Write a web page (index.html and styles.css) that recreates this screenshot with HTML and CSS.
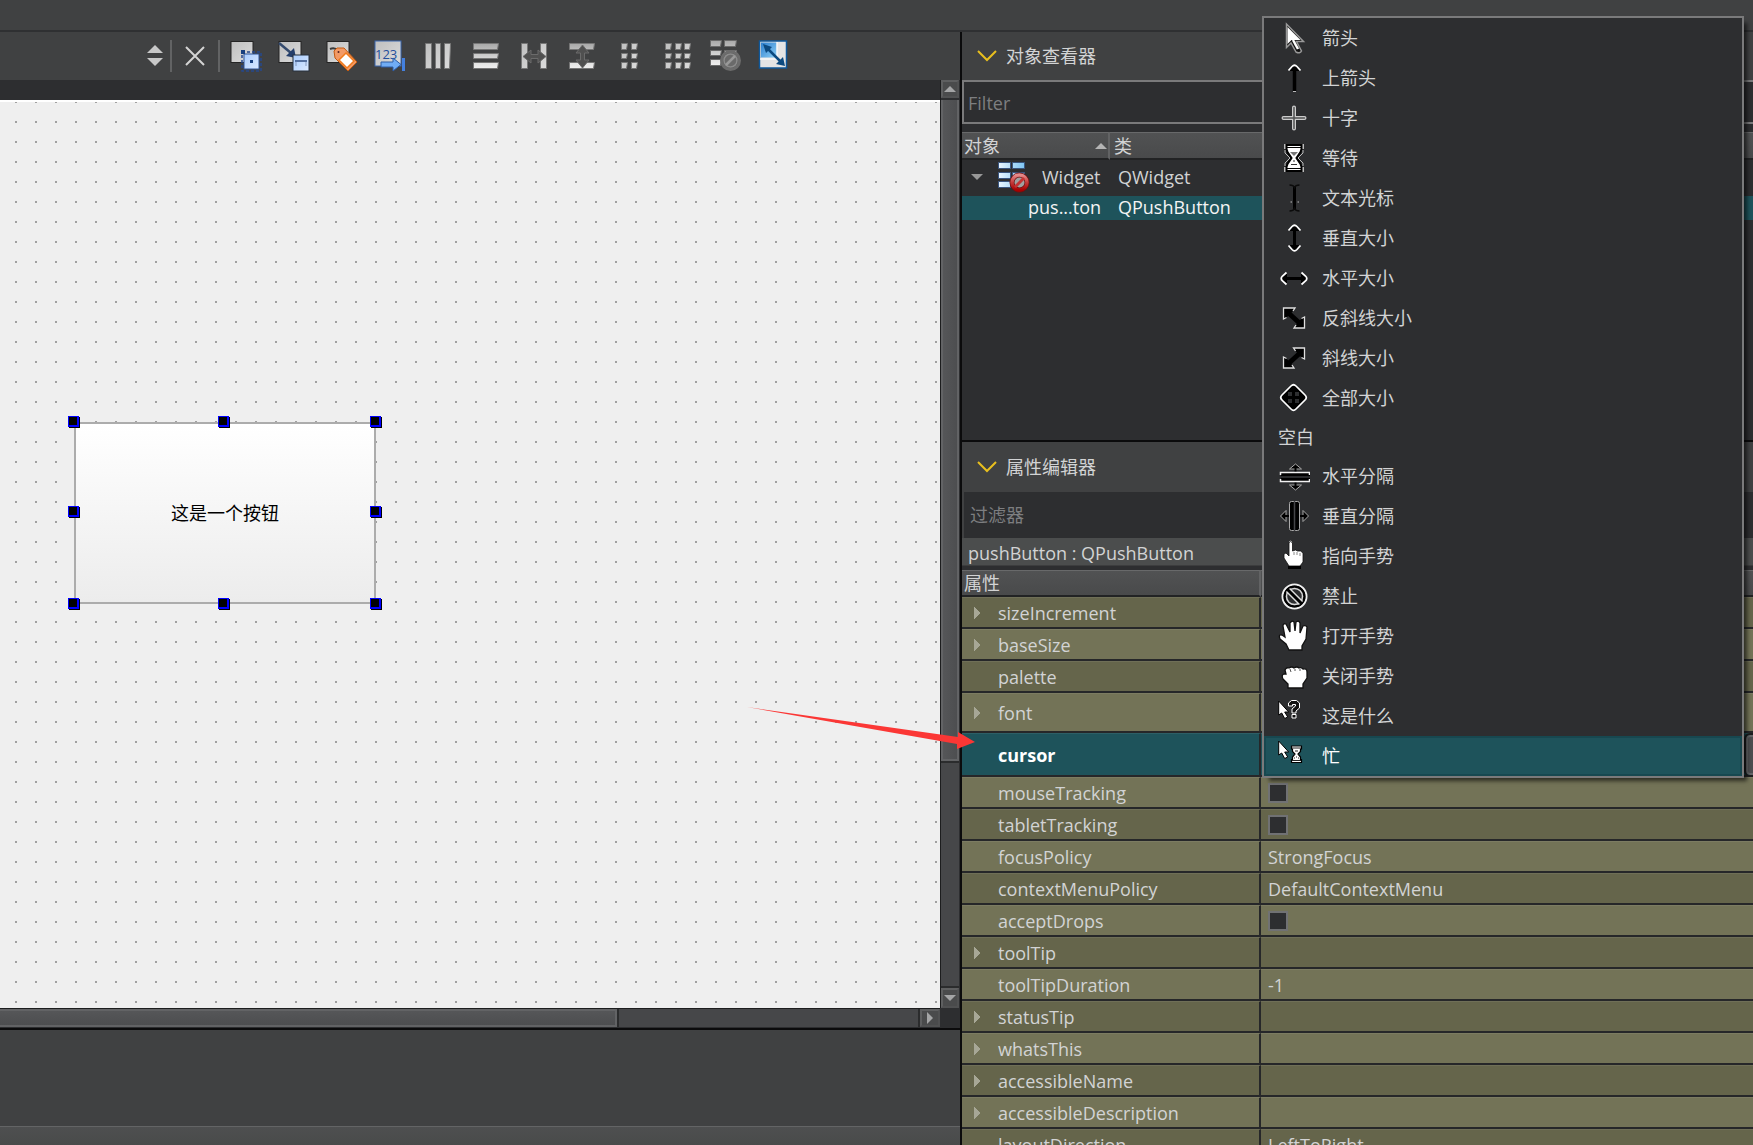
FILE: index.html
```html
<!DOCTYPE html>
<html lang="zh-CN">
<head>
<meta charset="utf-8">
<title>Qt Designer</title>
<link rel="stylesheet" href="styles.css">
</head>
<body>
<svg class="defs" aria-hidden="true">
  <defs>
    <linearGradient id="steel" x1="0" y1="0" x2="1" y2="1"><stop offset="0" stop-color="#bfbfbf"/><stop offset="1" stop-color="#dcdcdc"/></linearGradient>
    <linearGradient id="bar" x1="0" y1="0" x2="0" y2="1"><stop offset="0" stop-color="#a8a8a8"/><stop offset=".7" stop-color="#dedede"/><stop offset="1" stop-color="#f0f0f0"/></linearGradient>
    <linearGradient id="sky" x1="0" y1="0" x2="1" y2="1"><stop offset="0" stop-color="#a9cdff"/><stop offset="1" stop-color="#dbe9ff"/></linearGradient>
    <linearGradient id="blue" x1="0" y1="0" x2="1" y2="1"><stop offset="0" stop-color="#2b7fd0"/><stop offset="1" stop-color="#8fd0f5"/></linearGradient>
    <linearGradient id="cell" x1="0" y1="0" x2="1" y2="0"><stop offset="0" stop-color="#eaf6ff"/><stop offset="1" stop-color="#7cc4f2"/></linearGradient>
    <linearGradient id="red" x1="0" y1="0" x2="0" y2="1"><stop offset="0" stop-color="#e58c8c"/><stop offset=".5" stop-color="#c43a3a"/><stop offset="1" stop-color="#a80000"/></linearGradient>
  </defs>
</svg>
<div class="app">
  <header class="menubar"></header>
  <main class="workspace">
    <section class="editor">
      <div class="toolbar" role="toolbar">
        <button class="spin" aria-label="切换窗体"><svg viewBox="0 0 16 22"><path d="M8 0l8 8H0zM8 21l8-8H0z" fill="#c8c8c8"/></svg></button>
        <span class="sep"></span>
        <button class="close" aria-label="关闭"><svg viewBox="0 0 20 20"><path d="M1 1l18 18M19 1L1 19" stroke="#d4d4d4" stroke-width="2" fill="none"/></svg></button>
        <span class="sep"></span>
        <div class="tools">
          <button aria-label="编辑控件"><svg viewBox="0 0 32 32"><rect x="1" y="1.500" width="22" height="21" fill="url(#steel)" stroke="#242424"/><rect x="12" y="12" width="19" height="19" fill="none" stroke="#25488f" stroke-width="1.500" stroke-dasharray="3 2"/><rect x="14" y="14" width="15" height="15" fill="url(#sky)" stroke="#2f5598"/><path d="M11 10h4v4h-4zM20 20h3v3h-3z" fill="#173f7f"/></svg></button>
          <button aria-label="编辑信号/槽"><svg viewBox="0 0 32 32"><rect x="1" y="1.500" width="22" height="21" fill="url(#steel)" stroke="#242424"/><path d="M1 3L13 13" stroke="#344a6d" stroke-width="2.500"/><path d="M18 18L8 16l8-8z" fill="#243f6c"/><rect x="15" y="15" width="16" height="16" fill="url(#sky)" stroke="#26303c"/><path d="M18 26v-5h10v5" fill="none" stroke="#8397bd" stroke-width="1"/><path d="M17 21h12" stroke="#5470a0" stroke-width="2"/></svg></button>
          <button aria-label="编辑伙伴"><svg viewBox="0 0 32 32"><rect x="1" y="1.500" width="22" height="21" fill="url(#steel)" stroke="#242424"/><path d="M4 9q5-2 8 2" stroke="#3a3a3a" stroke-width="2" fill="none"/><path d="M8 11l3-3h7l13 14-9 9L9 18z" fill="#f29a66" stroke="#c45a10"/><path d="M20 13l8 8-7 7-8-8z" fill="#fff" stroke="#f07a1c" stroke-width="1.500"/><circle cx="12.500" cy="12" r="1" fill="#522"/></svg></button>
          <button aria-label="编辑Tab顺序"><svg viewBox="0 0 32 32"><rect x="1" y="1" width="26" height="25" fill="url(#steel)" stroke="#3a66ad"/><text x="1" y="19" class="tab-digits">123</text><path d="M7 22h12v-4l8 6.500-8 6.500v-4H7z" fill="#70acf5" stroke="#2c5ca6"/><path d="M29.500 18v13" stroke="#4480de" stroke-width="3"/></svg></button>
          <button aria-label="水平布局"><svg viewBox="0 0 32 32"><g fill="url(#steel)" stroke="#777"><path d="M3.500 3.500h6v25h-6zM13.500 3.500h5v25h-5zM22.500 3.500h6l-1 25h-5z"/></g></svg></button>
          <button aria-label="垂直布局"><svg viewBox="0 0 32 32"><g fill="url(#bar)" stroke="#777"><path d="M3.500 3.500h25l-1 6h-24zM3.500 13.500h25l-1 5h-24zM3.500 22.500h25l-1 6h-24z"/></g></svg></button>
          <button aria-label="水平分裂器布局"><svg viewBox="0 0 32 32"><g fill="url(#steel)" stroke="#777"><path d="M3.500 3.500h6v25h-6zM22.500 3.500h6v25h-6z"/></g><path d="M5 16.500l8-6.500v4.500h7V10l8 6.500-8 6.500v-4.500h-7V23z" fill="#505050" stroke="#6b6b6b"/></svg></button>
          <button aria-label="垂直分裂器布局"><svg viewBox="0 0 32 32"><g fill="url(#bar)" stroke="#777"><path d="M3.500 3.500h25l-1 6h-24zM3.500 22.500h25l-1 6h-24z"/></g><path d="M16.500 5l6.500 8h-4.500v7H23l-6.500 8-6.500-8h4.500v-7H10z" fill="#505050" stroke="#6b6b6b"/></svg></button>
          <button aria-label="窗体布局"><svg viewBox="0 0 32 32"><g fill="url(#steel)" stroke="#777"><path d="M7.500 3.500h6l-1 6h-5zM17.500 3.500h6l-1 6h-5zM7.500 13.500h6l-1 5h-5zM17.500 13.500h6l-1 5h-5zM7.500 22.500h6l-1 6h-5zM17.500 22.500h6l-1 6h-5z"/></g></svg></button>
          <button aria-label="栅格布局"><svg viewBox="0 0 32 32"><g fill="url(#steel)" stroke="#777"><path d="M3.500 3.500h6l-1 6h-5zM13.500 3.500h6l-1 6h-5zM22.500 3.500h6l-1 6h-5zM3.500 13.500h6l-1 5h-5zM13.500 13.500h6l-1 5h-5zM22.500 13.500h6l-1 5h-5zM3.500 22.500h6l-1 6h-5zM13.500 22.500h6l-1 6h-5zM22.500 22.500h6l-1 6h-5z"/></g></svg></button>
          <button aria-label="打破布局"><svg viewBox="0 0 32 32"><g fill="url(#bar)" stroke="#6b6b6b"><path d="M.5.5h11l-1 6H.5zM14.500.5h12l-1 6h-11zM.5 10.500h11l-1 5H.5zM14.500 10.500h12l-1 5h-11zM.5 19.500h11l-1 6H.5z"/></g><circle cx="20.500" cy="20.500" r="9" fill="#555" stroke="#6c6c6c" stroke-width="3"/><circle cx="20.500" cy="20.500" r="6.500" fill="#6a6a6a" stroke="#8c8c8c" stroke-width="1.500"/><path d="M16 25l9-9" stroke="#999" stroke-width="2.500"/></svg></button>
          <button aria-label="调整大小"><svg viewBox="0 0 32 32"><rect x="1.500" y="1" width="27" height="27" fill="#e4e4e4" stroke="#0f5799" stroke-width="1.500"/><rect x="3" y="2.500" width="16" height="15" fill="url(#blue)"/><path d="M19 2v17H2" stroke="#f8f8f8" stroke-width="1.500" fill="none"/><path d="M9 8l13 13" stroke="#0c4a80" stroke-width="2.500"/><path d="M5 4l9 3-6 6zM27 26l-9-2 7-7z" fill="#0c4a80"/></svg></button>
        </div>
      </div>

      <div class="viewport">
        <div class="form-area">
          <div class="form-canvas">
            <div class="widget">
              <button class="push">这是一个按钮</button>
              <i class="handle n w"></i><i class="handle n c"></i><i class="handle n e"></i>
              <i class="handle m w"></i><i class="handle m e"></i>
              <i class="handle s w"></i><i class="handle s c"></i><i class="handle s e"></i>
            </div>
          </div>
        </div>
        <div class="vscroll">
          <button class="step" aria-label="向上"><svg viewBox="0 0 12 6"><path d="M6 0l6 6H0z"/></svg></button>
          <div class="vtrack"><div class="vthumb"></div></div>
          <button class="step" aria-label="向下"><svg viewBox="0 0 12 6"><path d="M0 0h12L6 6z"/></svg></button>
        </div>
        <div class="hscroll">
          <div class="htrack"><div class="hthumb"></div></div>
          <button class="step" aria-label="向右"><svg class="side" viewBox="0 0 6 12"><path d="M0 0l6 6-6 6z"/></svg></button>
        </div>
        <div class="corner"></div>
      </div>
      <div class="lower"></div>
      <footer class="status"></footer>
    </section>

    <aside class="dock">
      <section class="inspector">
        <h2 class="title"><svg viewBox="0 0 20 12"><path d="M1 1l9 9 9-9" fill="none" stroke="#e8bf1e" stroke-width="2"/></svg>对象查看器</h2>
        <input class="filter boxed" type="text" placeholder="Filter" aria-label="Filter">
        <table class="tree">
          <thead><tr><th class="col-object"><span class="head">对象<svg viewBox="0 0 12 6"><path d="M6 0l6 6H0z" fill="#b4b4b4"/></svg></span></th><th>类</th></tr></thead>
          <tbody>
            <tr class="root"><td><span class="node"><svg class="twist" viewBox="0 0 12 6"><path d="M0 0h12L6 6z" fill="#989898"/></svg><svg class="node-icon" viewBox="0 0 32 32"><g fill="url(#cell)" stroke="#3a5680"><path d="M.5 1.500h12v6H.5zM14.500 1.500h12v6h-12zM.5 11.500h12v6H.5zM14.500 11.500h12v6h-12zM.5 20.500h12v6H.5z"/></g><circle cx="21.500" cy="21.500" r="7.500" fill="#a0a0a0" stroke="#6e1010" stroke-width="5"/><circle cx="21.500" cy="21.500" r="7.500" fill="none" stroke="url(#red)" stroke-width="3.500"/><path d="M17 26l9-9" stroke="#c43232" stroke-width="3"/></svg>Widget</span></td><td>QWidget</td></tr>
            <tr class="selected"><td><span class="leaf">pus...ton</span></td><td>QPushButton</td></tr>
          </tbody>
        </table>
      </section>

      <section class="properties">
        <h2 class="title tall"><svg viewBox="0 0 20 12"><path d="M1 1l9 9 9-9" fill="none" stroke="#e8bf1e" stroke-width="2"/></svg>属性编辑器</h2>
        <input class="filter plain" type="text" placeholder="过滤器" aria-label="过滤器">
        <div class="object-name">pushButton : QPushButton</div>
        <table class="props">
          <thead><tr><th>属性</th><th></th></tr></thead>
          <tbody>
            <tr class="has-child"><td>sizeIncrement</td><td></td></tr>
            <tr class="has-child"><td>baseSize</td><td></td></tr>
            <tr><td>palette</td><td></td></tr>
            <tr class="has-child font"><td>font</td><td></td></tr>
            <tr class="current"><td>cursor</td><td><button class="drop" aria-label="选择光标"></button></td></tr>
            <tr><td><label for="p-mouse">mouseTracking</label></td><td><input id="p-mouse" type="checkbox"></td></tr>
            <tr><td><label for="p-tablet">tabletTracking</label></td><td><input id="p-tablet" type="checkbox"></td></tr>
            <tr><td>focusPolicy</td><td>StrongFocus</td></tr>
            <tr><td>contextMenuPolicy</td><td>DefaultContextMenu</td></tr>
            <tr><td><label for="p-drops">acceptDrops</label></td><td><input id="p-drops" type="checkbox"></td></tr>
            <tr class="has-child"><td>toolTip</td><td></td></tr>
            <tr><td>toolTipDuration</td><td>-1</td></tr>
            <tr class="has-child"><td>statusTip</td><td></td></tr>
            <tr class="has-child"><td>whatsThis</td><td></td></tr>
            <tr class="has-child"><td>accessibleName</td><td></td></tr>
            <tr class="has-child"><td>accessibleDescription</td><td></td></tr>
            <tr><td>layoutDirection</td><td>LeftToRight</td></tr>
          </tbody>
        </table>
      </section>
    </aside>

    <svg class="pointer" viewBox="0 0 230 46" aria-hidden="true"><path d="M1 2l211 30v-5l17 10-18 7v-5z" fill="#fb3735"/></svg>
  </main>

  <div class="popup" role="listbox" aria-label="cursor">
    <button class="item" role="option"><svg viewBox="0 0 32 32"><path d="M8.500 2v23.500l4.500-4.500 5 9q4 2 5.500-1l-5-9.500h7z" fill="#111" stroke="#999" stroke-width="1.500"/><path d="M9.500 5v17l4-4h9z" fill="#fff"/><path d="M15 18l5 9" stroke="#fff" stroke-width="2.500"/></svg>箭头</button>
    <button class="item" role="option"><svg viewBox="0 0 32 32"><path d="M16.500 4v25" stroke="#000" stroke-width="3.500"/><path d="M16.500 3l5 6h-10z"/><path d="M10.500 8.500l3.500-4q2.500-2.500 5 0l3.500 4" fill="none" stroke="#fff" stroke-width="1.700"/><path d="M15 29.500h3" stroke="#bbb"/></svg>上箭头</button>
    <button class="item" role="option"><svg viewBox="0 0 32 32"><path d="M16 5.500v21M5.500 16h21" stroke="#ccc" stroke-width="4" stroke-linecap="round"/><path d="M16 5.500v21M5.500 16h21" stroke="#505152" stroke-width="1.500" stroke-linecap="round"/></svg>十字</button>
    <button class="item" role="option"><svg viewBox="0 0 32 32"><path d="M7 2v5M25 2v5M7 25v5M25 25v5" stroke="#bbb" stroke-width="2"/><path d="M8.500 3h15v4l-1 3-4 6 4 6 1 3v4h-15v-4l1-3 4-6-4-6-1-3z" fill="#fff" stroke="#000" stroke-width="2"/><path d="M7 8v3l5 5-5 5v3M25 8v3l-5 5 5 5v3" fill="none" stroke="#bbb"/><path d="M9 5.500h14M9 26.500h14" stroke="#000"/><path d="M12 10h8l-4 4z" fill="#777"/><path d="M16 18v2M13 23l1-1 1 1 1-1 1 1 1-1 1 1" stroke="#333" fill="none"/></svg>等待</button>
    <button class="item" role="option"><svg viewBox="0 0 32 32"><path d="M16.500 5v22" stroke="#000" stroke-width="3"/><path d="M11.500 3q4 0 5 2.500 1-2.500 5-2.500M11.500 29q4 0 5-2.500 1 2.500 5 2.500" fill="none" stroke="#0b0b0b" stroke-width="1.500"/><path d="M12.500 20h1.500M19.500 20h1.500" stroke="#bbb"/></svg>文本光标</button>
    <button class="item" role="option"><svg viewBox="0 0 32 32"><path d="M16.500 4v24" stroke="#000" stroke-width="3"/><path d="M16.500 3l5 6h-10zM16.500 29l5-6h-10z"/><path d="M10.500 8.500l3.500-4q2.500-2.500 5 0l3.500 4M10.500 23.500l3.500 4q2.500 2.500 5 0l3.500-4" fill="none" stroke="#fff" stroke-width="1.700"/></svg>垂直大小</button>
    <button class="item" role="option"><svg viewBox="0 0 32 32"><path d="M4 16.500h24" stroke="#000" stroke-width="3"/><path d="M3 16.500l6-5v10zM29 16.500l-6-5v10z"/><path d="M8.500 10.500l-4 3.500q-2.500 2.500 0 5l4 3.500M23.500 10.500l4 3.500q2.500 2.500 0 5l-4 3.500" fill="none" stroke="#fff" stroke-width="1.700"/></svg>水平大小</button>
    <button class="item" role="option"><svg viewBox="0 0 32 32"><path d="M11 11.500l11 10" stroke="#000" stroke-width="5"/><path d="M8.500 15.500l-3 1.500V6h11.500l-2 3M23.500 16.500l3-1.500v11H16l2-3" fill="#000" stroke="#e0e0e0" stroke-width="1.300"/></svg>反斜线大小</button>
    <button class="item" role="option"><svg viewBox="0 0 32 32"><path d="M21.500 11.500l-11 10" stroke="#000" stroke-width="5"/><path d="M23.500 15.500l3 1.500V6H15.500l2 3M8.500 16.500l-3-1.500v11H16l-2-3" fill="#000" stroke="#e0e0e0" stroke-width="1.300"/></svg>斜线大小</button>
    <button class="item" role="option"><svg viewBox="0 0 32 32"><path d="M13 4q2.500-2.500 5 0l9 9q2.500 2.500 0 5l-9 9q-2.500 2.500-5 0l-9-9q-2.500-2.500 0-5z" fill="#000" stroke="#fff" stroke-width="1.700"/><path d="M10 10h4v4h-4zM17 10h4v4h-4zM10 17h4v4h-4zM17 17h4v4h-4z" fill="#2d2e30"/></svg>全部大小</button>
    <button class="item blank" role="option">空白</button>
    <button class="item" role="option"><svg viewBox="0 0 32 32"><path d="M11.500 9l6-5 6 5zM11.500 25l6 5 6-5z" fill="#000" stroke="#aaa"/><path d="M17.500 6v22" stroke="#000" stroke-width="2"/><rect x="3" y="12.500" width="29" height="9" rx="1" fill="#000"/><path d="M2.500 15v-2.500h29V15M2.500 19v2.500h29V19" fill="none" stroke="#f0f0f0" stroke-width="1.500"/><path d="M3 17h29" stroke="#55575a"/></svg>水平分隔</button>
    <button class="item" role="option"><svg viewBox="0 0 32 32"><path d="M8 10.500L2.500 16 8 21.500zM25 10.500l5.500 5.500-5.500 5.500z" fill="#000" stroke="#aaa"/><path d="M4 16h25" stroke="#000" stroke-width="2"/><rect x="11.500" y="1.500" width="10" height="29" rx="2" fill="#000" stroke="#aaa"/><path d="M16.500 1v30" stroke="#444548" stroke-width="1.500"/></svg>垂直分隔</button>
    <button class="item" role="option"><svg viewBox="0 0 32 32"><path d="M11 3q1.500-3 3.500 0v8l3-1 2 1h3l2.500 2v9l-3 4H11l-5-8v-4l2-1 3 3z" fill="#fff" stroke="#111" stroke-width=".8"/><path d="M16 12v3M19 12v3M22 13v3" stroke="#555" stroke-width=".7"/><path d="M10 27.500h13" stroke="#000" stroke-width="3"/><path d="M11 2q1.500-2 3 0" stroke="#aaa" fill="none"/></svg>指向手势</button>
    <button class="item" role="option"><svg viewBox="0 0 32 32"><circle cx="16.500" cy="16.500" r="12" fill="#2d2e30" stroke="#f0f0f0" stroke-width="2"/><circle cx="16.500" cy="16.500" r="10" fill="none" stroke="#000" stroke-width="2"/><circle cx="16.500" cy="16.500" r="8" fill="none" stroke="#d8d8d8" stroke-width="1.500"/><path d="M10 10l13 13" stroke="#ddd" stroke-width="6"/><path d="M9 9l15 15" stroke="#000" stroke-width="3"/></svg>禁止</button>
    <button class="item" role="option"><svg viewBox="0 0 32 32"><path d="M11 30l-3-6-6-5q-2-5 2-4l3 2L5 6q0-3 3-2l4 8V3q2-3 4-1l1 9 1-9q3-2 4 1v10l3-7q3-1 4 1l-1 12-4 7v4z" fill="#fff" stroke="#111" stroke-width="1.300"/></svg>打开手势</button>
    <button class="item" role="option"><svg viewBox="0 0 32 32"><path d="M10 28v-4l-5-5q-2-4 1-5h2l-1-4q1-3 4-2 3-2 5 0 3-2 5 0 2-1 4 1 4-1 4 3v6l-4 6v4z" fill="#fff" stroke="#111" stroke-width="1.300"/><path d="M12 9l1 3M17 9v2M22 9v2" stroke="#555"/></svg>关闭手势</button>
    <button class="item" role="option"><svg viewBox="0 0 32 32"><path d="M.7 1v14l3-2 3 5.500 3-1.500-3-5h4z" fill="#fff" stroke="#000"/><path d="M10.500 6V3l3-2.500h5L21.500 3v5L18 11v2h-4V9l3.500-3V4.500h-3V6zM14 14.500h4V18h-4z" fill="#111" stroke="#fff"/></svg>这是什么</button>
    <button class="item active" role="option" aria-selected="true"><svg viewBox="0 0 32 32"><path d="M.7 1v14l3-2 3 5.500 3-1.500-3-5h4z" fill="#fff" stroke="#000"/><path d="M13.500 6h10v3h-1v2.500L20 14l2.500 3v2.500h1v3h-10v-3h1V17l2.500-3-2.500-2.500V9h-1z" fill="#fff" stroke="#000" stroke-width="1.200"/><path d="M14 8h9M14 20.500h9M17 11h3M16 18h1M18 17h1M20 18h1" stroke="#222" fill="none"/></svg>忙</button>
  </div>
</div>
</body>
</html>
```
FILE: styles.css
```css
* { box-sizing: border-box; }

body {
  margin: 0;
  background: #404142;
  color: #d2d3d4;
  font: 18px/24px "Open Sans", "Noto Sans CJK SC", sans-serif;
}

button, input {
  margin: 0;
  padding: 0;
  border: 0;
  background: none;
  color: inherit;
  font: inherit;
}

svg { display: block; flex: none; }
.defs { position: absolute; width: 0; height: 0; }

.app {
  position: relative;
  display: flex;
  flex-direction: column;
  height: 100vh;
  overflow: hidden;
}

.menubar {
  flex: none;
  height: 32px;
  border-bottom: 2px solid #2f3032;
}

.workspace {
  position: relative;
  display: grid;
  grid-template-columns: minmax(0, 1fr) 793px;
  flex: 1;
  min-height: 0;
}

/* form editor */
.editor { display: flex; flex-direction: column; min-height: 0; }

.toolbar {
  display: flex;
  align-items: center;
  flex: none;
  height: 48px;
  padding: 0 10px 0 147px;
}
.spin svg { width: 16px; height: 22px; }
.spin { margin-right: 7px; }
.close svg { width: 20px; height: 20px; }
.close { margin: 0 13px; }
.sep { width: 2px; height: 32px; background: #626364; }
.tools { display: flex; gap: 16px; margin-left: 10px; }
.tools svg { width: 32px; height: 32px; }
.tab-digits { font: 13px "Open Sans", sans-serif; fill: #244f9c; }

.viewport {
  display: grid;
  grid-template: minmax(0, 1fr) 20px / minmax(0, 1fr) 20px;
  flex: 1;
  min-height: 0;
  background: #2d2e30;
}
.form-area { padding-top: 20px; }
.form-canvas {
  position: relative;
  height: 100%;
  border-top: 2px solid #fff;
  background: conic-gradient(from 270deg at 2px 2px, #a0a0a0 90deg, transparent 0) 15px -1px / 20px 20px #efefef;
}
.widget {
  position: absolute;
  left: 74px;
  top: 320px;
  width: 302px;
  height: 182px;
}
.push {
  width: 100%;
  height: 100%;
  border: 2px solid #acacac;
  background: linear-gradient(#fff, #ececec);
  color: #000;
}
.handle {
  position: absolute;
  width: 11px;
  height: 11px;
  border: solid #00f;
  border-width: 1px 2px 2px 1px;
  background: #000;
  box-shadow: 1px 1px 0 #000;
}
.handle.n { top: -6px; }
.handle.m { top: 84px; }
.handle.s { bottom: -5px; }
.handle.w { left: -6px; }
.handle.c { left: 144px; }
.handle.e { right: -5px; }

.vscroll { display: flex; flex-direction: column; padding-right: 1px; border-left: 1px solid #1c1d1e; }
.hscroll { display: flex; padding-bottom: 1px; border-top: 1px solid #1c1d1e; }
.step {
  display: flex;
  align-items: center;
  justify-content: center;
  flex: none;
  width: 18px;
  height: 18px;
  border: 2px solid #5e5f60;
  border-right-color: #505152;
  border-bottom-color: #505152;
  background: #4a4b4c;
  fill: #a4a5a6;
}
.hscroll .step { width: 20px; }
.vscroll .step:last-child { height: 20px; }
.step svg { width: 12px; height: 6px; }
.step .side { width: 6px; height: 12px; }
.vtrack { flex: 1; margin-top: 2px; background: #464749; border-bottom: 2px solid #2b2c2d; }
.vthumb {
  height: 74.600%;
  border: 2px solid #626365;
  border-top: 0;
  box-shadow: 0 2px #2b2c2d;
  background: linear-gradient(90deg, #555658, #4d4e50);
}
.htrack { flex: 1; background: #464749; border-right: 2px solid #2b2c2d; }
.hthumb {
  width: 67.200%;
  height: 18px;
  border: 2px solid #626365;
  border-left: 0;
  box-shadow: 2px 0 #2b2c2d;
  background: linear-gradient(#555658, #4d4e50);
}
.lower { flex: none; height: 98px; border-top: 2px solid #0b0b0c; }
.status {
  flex: none;
  height: 19px;
  border-top: 1px solid #636465;
  background: linear-gradient(#4e4f50, #494b4a);
}

/* docks */
.dock {
  display: flex;
  flex-direction: column;
  min-height: 0;
  border-left: 2px solid #0b0b0c;
}
.inspector {
  flex: none;
  height: 410px;
  border-bottom: 2px solid #0b0b0c;
  background: #2d2e30;
}
.properties { flex: 1; min-height: 0; overflow: hidden; background: #2d2e30; }

.title {
  display: flex;
  align-items: center;
  gap: 9px;
  height: 48px;
  margin: 0;
  padding-left: 15px;
  background: #404142;
  font-size: 18px;
  font-weight: 400;
}
.title.tall { height: 50px; }
.title svg { width: 20px; height: 12px; }

.filter { display: block; width: 100%; }
.filter::placeholder { color: #7d7e80; opacity: 1; }
.filter.boxed { height: 44px; padding: 2px 4px 0; border: 2px solid #7a7a7b; border-right: 0; }
.filter.plain { height: 46px; padding: 0 6px; border-left: 2px solid #404142; }

table { width: 100%; border-spacing: 0; table-layout: fixed; }
th, td { padding: 0; text-align: left; font-weight: 400; }
th {
  height: 26px;
  border-top: 1px solid #68696a;
  border-bottom: 2px solid #222324;
  background: linear-gradient(#515253, #494a4b);
}

.tree { margin-top: 8px; }
.tree th { height: 28px; padding-left: 4px; line-height: 24px; }
.tree td { padding-left: 7px; white-space: nowrap; }
.tree .col-object { width: 148px; padding-left: 2px; border-right: 2px solid #626364; }
.tree td + td { padding-left: 8px; }
.tree td:first-child { padding-left: 0; }
.head { display: flex; align-items: center; justify-content: space-between; padding-right: 1px; }
.head svg { width: 12px; height: 6px; }
.root td { height: 36px; padding-bottom: 2px; }
.node { display: flex; align-items: center; }
.twist { width: 12px; height: 6px; margin: 0 15px 0 9px; }
.node-icon { width: 32px; height: 32px; margin-right: 12px; }
.leaf { padding-left: 66px; }
.selected td { height: 24px; padding-bottom: 2px; line-height: 22px; background: #1e535b; color: #f4f4f4; }

.object-name {
  height: 28px;
  margin-bottom: 4px;
  padding-left: 6px;
  border-bottom: 1px solid #3c3d3e;
  background: #4b4d4d;
  line-height: 30px;
}

.props th:first-child { width: 299px; padding-left: 2px; border-right: 2px solid #626364; }
.props th { height: 27px; line-height: 24px; }
.props td {
  height: 32px;
  border-top: 1px solid rgba(255, 255, 255, .07);
  border-bottom: 2px solid #262729;
  line-height: 28px;
}
.props td:first-child { padding-left: 36px; border-right: 2px solid #262729; }
.props td:last-child { padding-left: 7px; }
.props tr:nth-child(odd) td { background-color: #65654b; }
.props tr:nth-child(even) td { background-color: #737357; }
.props tr:nth-child(n+7):nth-child(odd) td { background-color: #65654b; }
.props .has-child td:first-child {
  background-image: conic-gradient(from 225deg at 100% 50%, #a7a796 0 90deg, transparent 0);
  background-repeat: no-repeat;
  background-size: 6px 12px;
  background-position: 12px 50%;
}
.props .font td { height: 40px; }
.props .current td { height: 44px; padding-right: 0; }
.props .current td, .props tr.current:nth-child(odd) td { background-color: #1e535b; color: #fff; font-weight: 700; }
.drop {
  display: block;
  width: 20px;
  height: 40px;
  margin: 0 -13px 0 auto;
  border: 2px solid #656668;
  border-radius: 4px;
  outline: 2px solid #1c1d1e;
  background: #4c4d4f;
}
.props input {
  display: block;
  width: 20px;
  height: 20px;
  appearance: none;
  border: 2px solid #707173;
  background: #2d2e30;
}

/* cursor list */
.popup {
  position: absolute;
  top: 16px;
  right: 9px;
  width: 482px;
  border: 2px solid #7a7a7b;
  background: #2d2e30;
  box-shadow: 5px 5px 4px -2px rgba(0, 0, 0, .6);
}
.item {
  display: flex;
  align-items: center;
  gap: 12px;
  width: 100%;
  height: 40px;
  padding: 0 14px;
  text-align: left;
}
.item svg { width: 32px; height: 32px; }
.item.blank { height: 38px; }
.item.active { padding: 0 12px; border: 2px solid #174850; background: #1e535b; color: #fff; }

/* callout over the editor and the dock */
.pointer {
  position: absolute;
  left: 746px;
  top: 673px;
  width: 230px;
  height: 46px;
  pointer-events: none;
}
```
